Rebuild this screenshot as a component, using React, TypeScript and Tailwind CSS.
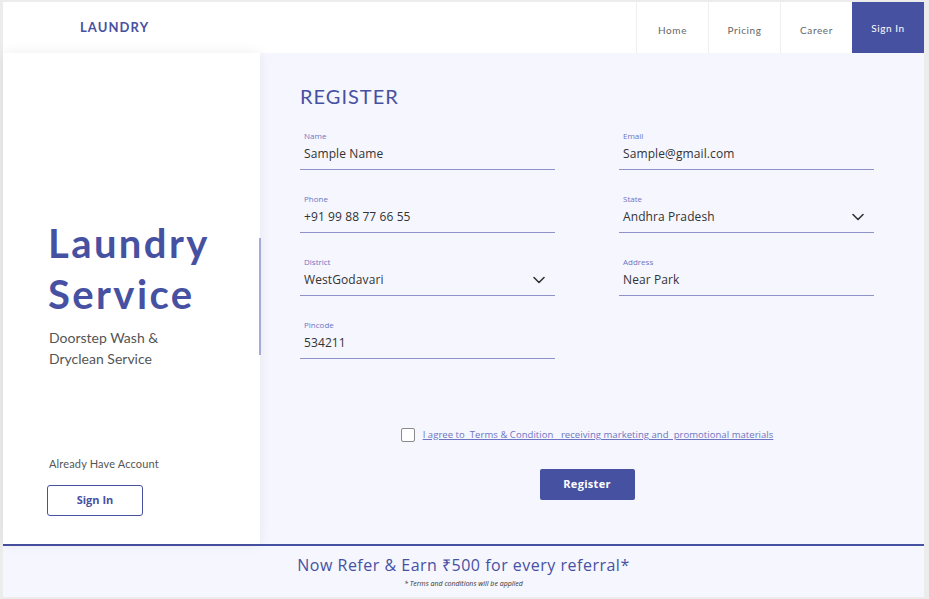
import React from "react";

const blue = "#4751a2";

type FieldProps = {
  label: string;
  value: string;
  select?: boolean;
};

const Chevron = () => (
  <svg width="12" height="8" viewBox="0 0 12 8" fill="none">
    <path d="M1 1.5l5 5 5-5" stroke="#333" strokeWidth={1.6} strokeLinecap="round" strokeLinejoin="round" />
  </svg>
);

const Field: React.FC<FieldProps> = ({ label, value, select }) => (
  <div className="flex flex-col border-b border-[#8d92c9] pb-[7px] pl-[4px] pr-[10px]">
    <span className="text-[8px] leading-[10px] text-[#6d75c2]">{label}</span>
    <div className="mt-[5px] flex items-center justify-between">
      <span className="text-[12px] leading-[16px] tracking-[0.1px] text-[#333]">{value}</span>
      {select && <Chevron />}
    </div>
  </div>
);

export default function App() {
  const nav = ["Home", "Pricing", "Career"];

  return (
    <div
      className="w-[929px] h-[599px] bg-[#ececec] pt-[2px] pl-[3px] pr-[5px] pb-[2px]"
      style={{ fontFamily: "'Open Sans', 'Liberation Sans', sans-serif" }}
    >
      <div className="flex flex-col h-full bg-white">
        {/* Header */}
        <header className="flex h-[51px] items-stretch bg-white">
          <div
            className="flex items-center pl-[77px] text-[13px] font-bold tracking-[1.1px] flex-1"
            style={{ fontFamily: "Lato, sans-serif", color: blue }}
          >
            LAUNDRY
          </div>
          <nav className="flex" style={{ fontFamily: "Lato, sans-serif" }}>
            {nav.map((item) => (
              <div
                key={item}
                className="w-[72px] flex items-center justify-center border-l border-[#efefef] text-[10px] tracking-[0.6px] text-[#666] pt-[6px]"
              >
                {item}
              </div>
            ))}
            <div className="w-[72px] flex items-center justify-center bg-[#4751a2] text-[10px] tracking-[0.6px] text-white pt-[2px]">
              Sign In
            </div>
          </nav>
        </header>

        {/* Middle */}
        <div className="flex flex-1 min-h-0 bg-[#f5f6fe]">
          {/* Left panel */}
          <aside
            className="relative w-[257px] bg-white flex flex-col pl-[45px] pb-[28px] shadow-[0_0_12px_rgba(0,0,0,0.07)]"
            style={{ fontFamily: "Lato, sans-serif" }}
          >
            <h1
              className="mt-[165px] text-[40px] leading-[51px] font-bold tracking-[2.4px]"
              style={{ color: blue }}
            >
              Laundry
              <br />
              Service
            </h1>
            <p className="mt-[7px] pl-[1px] text-[14px] leading-[21px] tracking-[0px] text-[#555]">
              Doorstep Wash &amp;
              <br />
              Dryclean Service
            </p>
            <div className="absolute right-[-1px] top-[185px] h-[117px] w-[2px] bg-[#a5aad6]" />
            <div className="mt-auto">
              <p className="pl-[1px] text-[11px] leading-[14px] tracking-[0.15px] text-[#555]">Already Have Account</p>
              <button
                className="mt-[14px] -ml-[1px] w-[96px] h-[31px] border-[1.5px] border-[#4751a2] rounded-[3px] text-[11px] font-bold bg-white"
                style={{ color: blue, fontFamily: "'Open Sans', sans-serif" }}
              >
                Sign In
              </button>
            </div>
          </aside>

          {/* Form */}
          <main className="flex-1 pl-[40px] pt-[31px]">
            <h2
              className="text-[20px] leading-[24px] tracking-[1px] font-normal"
              style={{ color: blue, fontFamily: "Lato, sans-serif" }}
            >
              REGISTER
            </h2>
            <div className="w-[574px]">
              <div className="mt-[23px] grid grid-cols-2 gap-x-[64px] gap-y-[24px]">
                <Field label="Name" value="Sample Name" />
                <Field label="Email" value="Sample@gmail.com" />
                <Field label="Phone" value="+91 99 88 77 66 55" />
                <Field label="State" value="Andhra Pradesh" select />
                <Field label="District" value="WestGodavari" select />
                <Field label="Address" value="Near Park" />
                <Field label="Pincode" value="534211" />
              </div>

              <div className="mt-[69px] flex items-center justify-center gap-[8px]">
                <span className="w-[14px] h-[14px] rounded-[2px] border-[1.5px] border-[#8a8a8a] bg-white" />
                <span
                  className="text-[9.5px] leading-[12px] underline whitespace-pre tracking-[0.05px]"
                  style={{ color: "#6d75c2" }}
                >
                  {"I agree to  Terms & Condition   receiving marketing and  promotional materials"}
                </span>
              </div>

              <div className="mt-[27px] flex justify-center">
                <button className="w-[95px] h-[31px] rounded-[2px] bg-[#4751a2] text-white text-[11px] font-bold tracking-[0.3px]">
                  Register
                </button>
              </div>
            </div>
          </main>
        </div>

        {/* Footer band */}
        <footer className="h-[53px] border-t-2 border-[#4751a2] bg-[#f5f6fe] flex flex-col items-center pt-[8px]">
          <p className="text-[16px] leading-[22px] font-medium tracking-[0.5px]" style={{ color: blue }}>
            Now Refer &amp; Earn ₹500 for every referral*
          </p>
          <p className="mt-[3px] text-[7px] leading-[9px] italic text-[#333]">
            * Terms and conditions will be applied
          </p>
        </footer>
      </div>
    </div>
  );
}
